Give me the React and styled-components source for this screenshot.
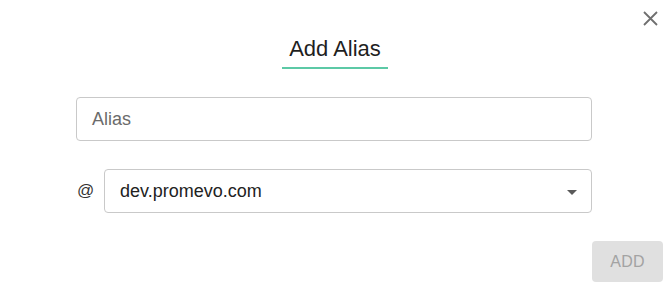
import styled, { createGlobalStyle } from "styled-components"

const GlobalStyle = createGlobalStyle`
  html, body {
    margin: 0;
    padding: 0;
    background: #ffffff;
  }
  body {
    font-family: "Liberation Sans", Arial, sans-serif;
  }
`

const Dialog = styled.div`
  position: relative;
  width: 670px;
  height: 288px;
  background: #ffffff;
  display: flex;
  flex-direction: column;
  align-items: center;
  box-sizing: border-box;
  padding-top: 36px;
`

const CloseButton = styled.button`
  position: absolute;
  top: 8px;
  right: 10px;
  width: 20px;
  height: 20px;
  padding: 0;
  border: none;
  background: none;
  display: flex;
  align-items: center;
  justify-content: center;
  cursor: pointer;
`

const Title = styled.h2`
  margin: 0;
  padding: 0 7px 5px;
  font-size: 22px;
  line-height: 26px;
  font-weight: 400;
  color: #1f1f1f;
  border-bottom: 2px solid #5cc9a6;
`

const Form = styled.div`
  width: 516px;
  margin-top: 28px;
  display: flex;
  flex-direction: column;
  gap: 28px;
  transform: translateX(-1px);
`

const Field = styled.div`
  height: 44px;
  box-sizing: border-box;
  border: 1px solid #c9c9c9;
  border-radius: 4px;
  display: flex;
  align-items: center;
  padding: 0 15px;
  font-size: 18px;
  color: ${(p) => (p.$placeholder ? "#6b6b6b" : "#222222")};
  flex: 1 1 auto;
  position: relative;
`

const Row = styled.div`
  display: flex;
  align-items: center;
  gap: 11px;
`

const At = styled.span`
  font-size: 17px;
  color: #333333;
  width: 16px;
  padding-left: 1px;
`

const Caret = styled.span`
  position: absolute;
  right: 14px;
  top: 20px;
  width: 0;
  height: 0;
  border-left: 5px solid transparent;
  border-right: 5px solid transparent;
  border-top: 5px solid #5a5a5a;
`

const Footer = styled.div`
  align-self: stretch;
  display: flex;
  justify-content: flex-end;
  padding-right: 7px;
  margin-top: 28px;
`

const AddButton = styled.button`
  width: 71px;
  height: 41px;
  border: none;
  border-radius: 4px;
  background: #e0e0e0;
  color: #a3a3a3;
  font-family: "Liberation Sans", Arial, sans-serif;
  font-size: 16px;
  letter-spacing: 0.3px;
`

export default function App() {
  return (
    <>
      <GlobalStyle />
      <Dialog>
        <CloseButton aria-label="close">
          <svg width="15" height="15" viewBox="0 0 15 15">
            <path d="M1 1 L14 14 M14 1 L1 14" stroke="#6f6f6f" strokeWidth="1.8" />
          </svg>
        </CloseButton>
        <Title>Add Alias</Title>
        <Form>
          <Field $placeholder>Alias</Field>
          <Row>
            <At>@</At>
            <Field>
              dev.promevo.com
              <Caret />
            </Field>
          </Row>
        </Form>
        <Footer>
          <AddButton disabled>ADD</AddButton>
        </Footer>
      </Dialog>
    </>
  )
}
